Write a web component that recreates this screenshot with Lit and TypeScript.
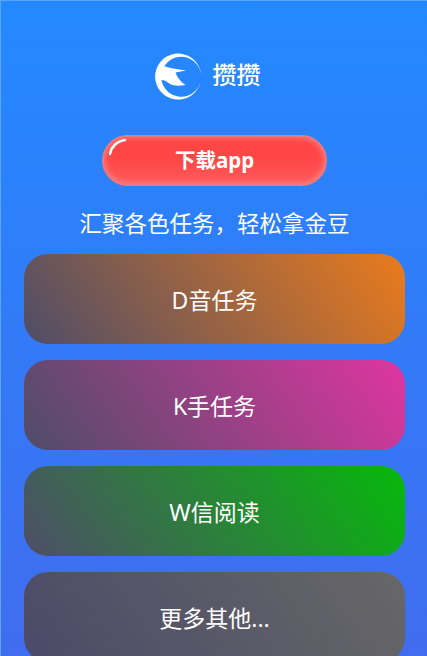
import { LitElement, html, css } from "lit";
import { customElement } from "lit/decorators.js";

const cards = [
  { label: "D音任务", cls: "orange" },
  { label: "K手任务", cls: "pink" },
  { label: "W信阅读", cls: "green" },
  { label: "更多其他...", cls: "gray" },
];

@customElement("app-root")
export class AppRoot extends LitElement {
  static styles = css`
    :host {
      display: block;
      width: 427px;
      height: 656px;
      overflow: hidden;
      font-family: "Noto Sans", "Noto Sans CJK SC", sans-serif;
      color: #fff;
    }
    .page {
      box-sizing: border-box;
      height: 662px;
      padding: 52px 22px 0 23px;
      background: linear-gradient(180deg, #2389ff 0%, #416cef 100%);
      border-left: 1px solid #5aa5ff;
      border-top: 1px solid #5aa5ff;
      display: flex;
      flex-direction: column;
      align-items: stretch;
    }
    .brand {
      display: flex;
      align-items: center;
      justify-content: center;
      gap: 11px;
      height: 46px;
      padding-right: 14px;
    }
    .brand svg { width: 47px; height: 47px; display: block; flex: none; }
    .brand span { font-size: 24px; line-height: 42px; padding-bottom: 2px; font-weight: 500; }
    .download {
      box-sizing: border-box;
      position: relative;
      align-self: center;
      width: 225px;
      height: 51px;
      margin-top: 36px;
      padding-bottom: 3px;
      border-radius: 26px;
      border: 2px solid #e87a80;
      background: linear-gradient(180deg, #ff4646 0%, #ff4646 45%, #ff5a5c 100%);
      box-shadow: inset 0 0 6px rgba(255, 190, 190, 0.6);
      display: flex;
      align-items: center;
      justify-content: center;
      font-size: 20.5px;
      font-weight: 700;
    }
    .gloss {
      position: absolute;
      left: 5px;
      top: 2px;
      width: 20px;
      height: 22px;
    }
    .tagline {
      margin: 18px 0 0;
      text-align: center;
      font-size: 22.5px;
      line-height: 40px;
    }
    .cards {
      display: flex;
      flex-direction: column;
      gap: 16px;
      margin-top: 10px;
    }
    .card {
      height: 90px;
      border-radius: 24px;
      display: flex;
      align-items: center;
      justify-content: center;
      font-size: 23px;
    }
    .orange { background: linear-gradient(55deg, #4e4d68 0%, #ea7b1c 100%); }
    .pink { background: linear-gradient(55deg, #4e4d68 0%, #df35a0 100%); }
    .green { background: linear-gradient(55deg, #4e4d68 0%, #05b90a 100%); }
    .gray { background: linear-gradient(55deg, #4b4a68 0%, #676767 100%); }
  `;

  render() {
    return html`
      <div class="page">
        <div class="brand">
          <svg viewBox="0 0 47 47">
            <path fill="#fff" d="M46 21A23 23 0 1 0 45.500 29A20 20 0 1 1 46 21Z" />
            <path fill="#fff" d="M6 12C11 14 15 15 18 15.500L31 17.500L20.500 19.500C22 24 26 29 30.500 32C24 33 19 33 15 31C12 29 10 27 6 27Z" />
          </svg>
          <span>攒攒</span>
        </div>
        <div class="download">
          <svg class="gloss" viewBox="0 0 20 22">
            <path d="M1 15C2 8 8 2 16 1" fill="none" stroke="#fff" stroke-width="2.500" stroke-linecap="round" />
          </svg>
          下载app
        </div>
        <div class="tagline">汇聚各色任务，轻松拿金豆</div>
        <div class="cards">
          ${cards.map((c) => html`<div class="card ${c.cls}">${c.label}</div>`)}
        </div>
      </div>
    `;
  }
}
